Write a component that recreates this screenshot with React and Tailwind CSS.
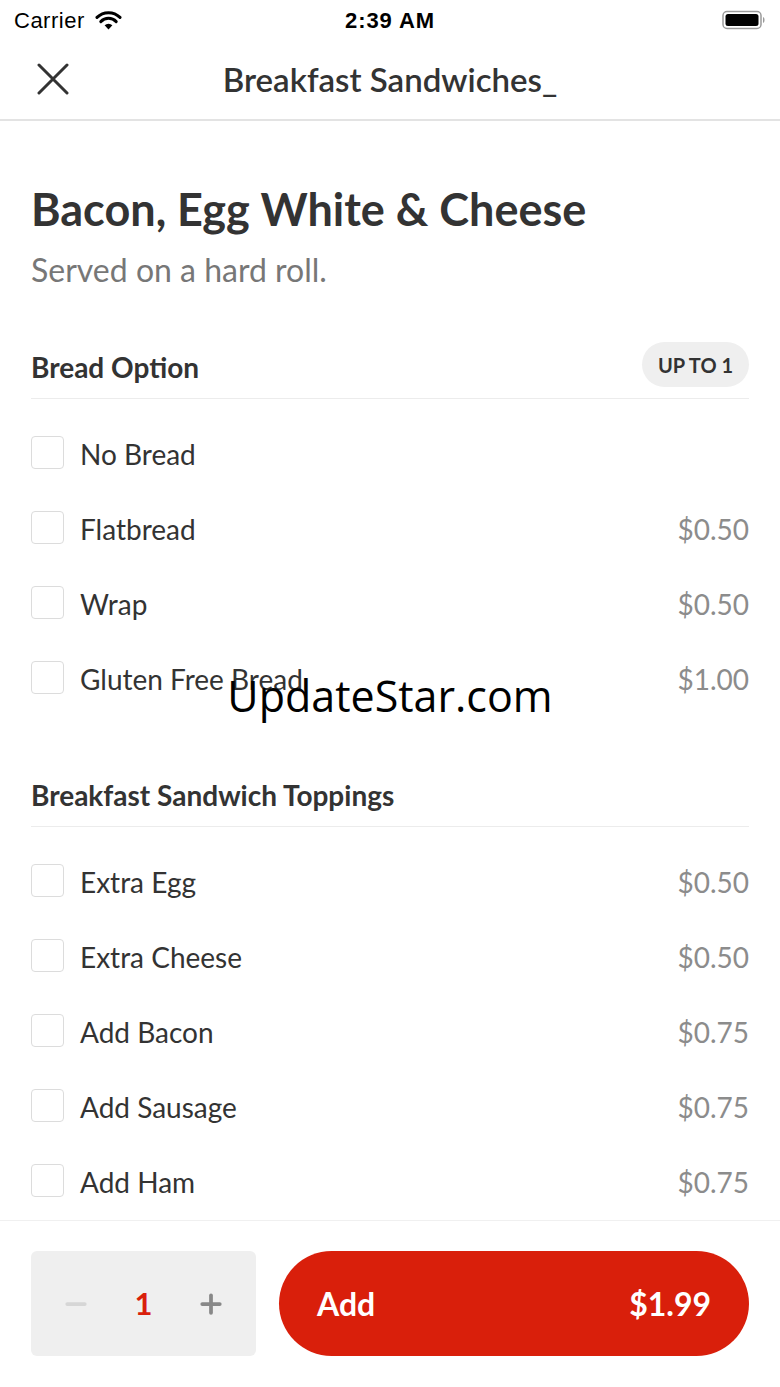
import { Minus, Plus } from 'lucide-react';

const breadOptions = [
  { name: 'No Bread', price: '' },
  { name: 'Flatbread', price: '$0.50' },
  { name: 'Wrap', price: '$0.50' },
  { name: 'Gluten Free Bread', price: '$1.00' },
];

const toppings = [
  { name: 'Extra Egg', price: '$0.50' },
  { name: 'Extra Cheese', price: '$0.50' },
  { name: 'Add Bacon', price: '$0.75' },
  { name: 'Add Sausage', price: '$0.75' },
  { name: 'Add Ham', price: '$0.75' },
];

function StatusBar() {
  return (
    <div className="relative flex h-[40px] items-center justify-between px-[14px] font-['Liberation_Sans',Roboto,sans-serif] text-black">
      <div className="flex items-center gap-[10px] text-[22px]">
        <span className="tracking-[0.5px]">Carrier</span>
        <svg width="27" height="20" viewBox="0 0 27 20">
          <path d="M13.5 19.5 L9.6 15.3 A5.6 5.6 0 0 1 17.4 15.3 Z" fill="#000" />
          <path d="M5.8 11.6 A10.8 10.8 0 0 1 21.2 11.6" stroke="#000" strokeWidth="3" fill="none" strokeLinecap="round" />
          <path d="M2 7.4 A16.4 16.4 0 0 1 25 7.4" stroke="#000" strokeWidth="3" fill="none" strokeLinecap="round" />
        </svg>
      </div>
      <span className="absolute left-1/2 -translate-x-1/2 text-[22px] font-semibold tracking-[0.9px]">2:39 AM</span>
      <svg width="44" height="20" viewBox="0 0 44 20">
        <rect x="1" y="1.5" width="38" height="17" rx="4" fill="none" stroke="#9a9a9a" strokeWidth="1.5" />
        <rect x="3.5" y="4" width="33" height="12" rx="2.5" fill="#000" />
        <path d="M41 7 C43 7.5 43 12.5 41 13 Z" fill="#9a9a9a" />
      </svg>
    </div>
  );
}

function OptionRow({ name, price }) {
  return (
    <div className="flex h-[75px] items-center">
      <div className="h-[33px] w-[33px] rounded-[4px] border-[1.5px] border-[#dcdcdc] bg-white" />
      <span className="ml-[16px] flex-1 pt-[3px] text-[28px] text-[#333]">{name}</span>
      {price && <span className="pt-[3px] text-[28px] text-[#8c8c8c]">{price}</span>}
    </div>
  );
}

function Section({ title, badge, items }) {
  return (
    <div>
      <div className="flex h-[45px] items-center justify-between">
        <h2 className="pt-[5px] text-[28px] font-bold text-[#333]">{title}</h2>
        {badge && (
          <span className="flex h-[45px] items-center rounded-full bg-[#efefef] px-[16px] text-[20px] font-bold text-[#333]">
            {badge}
          </span>
        )}
      </div>
      <div className="mt-[11px] border-b-[1.5px] border-[#ececec]" />
      <div className="pt-[16px]">
        {items.map((it) => (
          <OptionRow key={it.name} {...it} />
        ))}
      </div>
    </div>
  );
}

export default function App() {
  return (
    <div className="relative flex h-[1387px] w-[780px] flex-col overflow-hidden bg-white font-['Lato','Open_Sans',sans-serif]">
      <StatusBar />

      {/* Nav bar */}
      <div className="relative flex h-[81px] items-center justify-center border-b-2 border-[#e3e3e3]">
        <svg className="absolute left-[37px] top-[23px]" width="32" height="32" viewBox="0 0 32 32">
          <path d="M2 2 L30 30 M30 2 L2 30" stroke="#333" strokeWidth="3" strokeLinecap="round" />
        </svg>
        <span className="text-[33px] font-semibold text-[#333]">Breakfast Sandwiches_</span>
      </div>

      {/* Scroll content */}
      <div className="flex-1 overflow-hidden px-[31px]">
        <h1 className="mt-[62px] text-[45px] leading-[52px] font-bold text-[#333]">
          Bacon, Egg White &amp; Cheese
        </h1>
        <p className="mt-[17px] text-[32px] leading-[36px] text-[#777]">Served on a hard roll.</p>

        <div className="mt-[54px]">
          <Section title="Bread Option" badge="UP TO 1" items={breadOptions} />
        </div>
        <div className="mt-[55px]">
          <Section title="Breakfast Sandwich Toppings" items={toppings} />
        </div>
      </div>

      {/* Footer */}
      <div className="flex gap-[23px] border-t-[1.5px] border-[#f0f0f0] px-[31px] pt-[30px] pb-[31px]">
        <div className="flex h-[105px] w-[225px] items-center justify-between rounded-[6px] bg-[#efefef] px-[30px]">
          <Minus size={30} strokeWidth={3} className="text-[#d6d6d6]" />
          <span className="text-[31px] font-bold text-[#d91f0b]">1</span>
          <Plus size={30} strokeWidth={3} className="text-[#888]" />
        </div>
        <button className="flex h-[105px] flex-1 items-center justify-between rounded-full bg-[#d91f0b] px-[38px] text-[32px] font-bold text-white">
          <span>Add</span>
          <span>$1.99</span>
        </button>
      </div>

      {/* Watermark */}
      <span className="pointer-events-none absolute left-1/2 top-[664px] -translate-x-1/2 font-['Open_Sans',sans-serif] text-[43px] text-black">
        UpdateStar.com
      </span>
    </div>
  );
}
